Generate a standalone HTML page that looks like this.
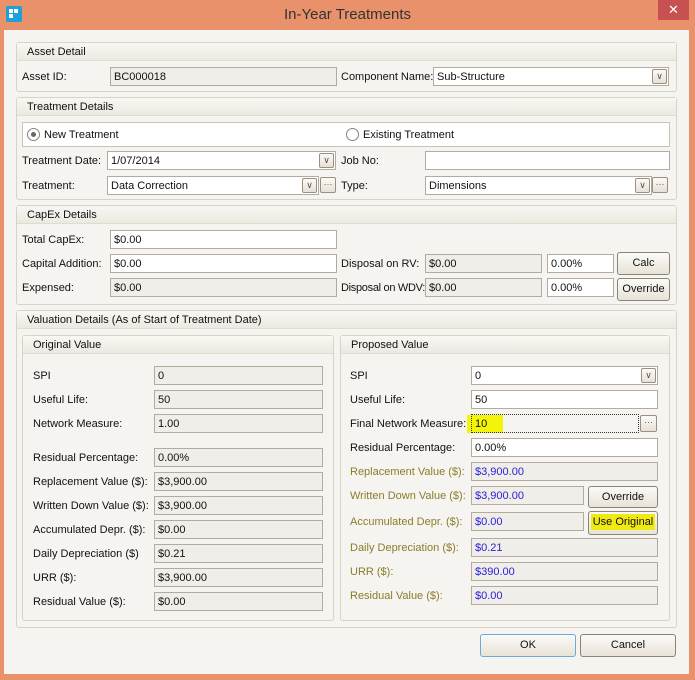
<!DOCTYPE html>
<html><head><meta charset="utf-8"><style>
*{box-sizing:border-box;margin:0;padding:0}
body{width:695px;height:680px;background:#E9916A;font-family:"Liberation Sans","DejaVu Sans",sans-serif;font-size:11px;color:#111;position:relative;overflow:hidden}
.a{position:absolute}
.title{left:0;top:0;width:695px;height:30px;text-align:center;line-height:30px;font-size:15px;color:#333}
.close{left:658px;top:0;width:31px;height:20px;background:#C75050;color:#fff;text-align:center;line-height:20px;font-size:13px;font-weight:bold}
.icon{left:6px;top:6px;width:16px;height:16px;background:#1da1d8;border-radius:2px}
.client{left:4px;top:30px;width:685px;height:644px;background:#F5F4F0}
.grp{border:1px solid #d9d3c7;border-radius:3px;background:#F5F4F0}
.hd{position:absolute;left:0;top:0;right:0;height:18px;background:linear-gradient(#f8f7f3,#ece9e1);border-bottom:1px solid #e0dcd2;padding-left:10px;line-height:19px}
.in{border:1px solid #b4aa9e;background:#fff;height:19px;line-height:18px;padding-left:3px;white-space:nowrap}
.g{background:#F0EEE9}
.lb{height:19px;line-height:21px;white-space:nowrap}
.ol{color:#8a7d2a}
.bl{color:#2b20d8}
.dd{border:1px solid #9c8f80;border-radius:2px;background:linear-gradient(#fbfaf7,#e6e1d6);width:15px;height:15px;text-align:center;font-size:9px;line-height:12px;color:#555}
.btn{border:1px solid #8d8274;border-radius:3px;background:linear-gradient(#fbfaf7,#e8e3d8);text-align:center;line-height:21px}
</style></head><body>
<div class="a icon"><div class="a" style="left:3px;top:3px;width:4px;height:4px;background:#fff"></div><div class="a" style="left:8px;top:3px;width:4px;height:4px;background:#fff"></div><div class="a" style="left:3px;top:8px;width:4px;height:4px;background:#fff"></div></div>
<div class="a title">In-Year Treatments</div>
<div class="a close">✕</div>
<div class="a client"></div>

<div class="a grp" style="left:16px;top:42px;width:661px;height:50px"><div class="hd">Asset Detail</div></div>
<div class="a lb" style="left:22px;top:67px">Asset ID:</div>
<div class="a in g" style="left:110px;top:67px;width:227px">BC000018</div>
<div class="a lb" style="left:341px;top:67px">Component Name:</div>
<div class="a in" style="left:433px;top:67px;width:236px">Sub-Structure</div>
<div class="a dd" style="left:652px;top:69px">∨</div>

<div class="a grp" style="left:16px;top:97px;width:661px;height:103px"><div class="hd">Treatment Details</div></div>
<div class="a" style="left:22px;top:122px;width:648px;height:25px;border:1px solid #c9c2b6;background:#fff"></div>
<div class="a" style="left:27px;top:128px;width:13px;height:13px;border:1px solid #8d8274;border-radius:50%;background:#fff"><div class="a" style="left:3px;top:3px;width:5px;height:5px;border-radius:50%;background:#666"></div></div>
<div class="a lb" style="left:44px;top:125px">New Treatment</div>
<div class="a" style="left:346px;top:128px;width:13px;height:13px;border:1px solid #8d8274;border-radius:50%;background:#fff"></div>
<div class="a lb" style="left:363px;top:125px">Existing Treatment</div>
<div class="a lb" style="left:22px;top:151px">Treatment Date:</div>
<div class="a in" style="left:107px;top:151px;width:229px">1/07/2014</div>
<div class="a dd" style="left:319px;top:153px">∨</div>
<div class="a lb" style="left:341px;top:151px">Job No:</div>
<div class="a in" style="left:425px;top:151px;width:245px"></div>
<div class="a lb" style="left:22px;top:176px">Treatment:</div>
<div class="a in" style="left:107px;top:176px;width:212px">Data Correction</div>
<div class="a dd" style="left:302px;top:178px">∨</div>
<div class="a dd" style="left:320px;top:177px;width:16px;height:16px">···</div>
<div class="a lb" style="left:341px;top:176px">Type:</div>
<div class="a in" style="left:425px;top:176px;width:227px">Dimensions</div>
<div class="a dd" style="left:635px;top:178px">∨</div>
<div class="a dd" style="left:652px;top:177px;width:16px;height:16px">···</div>

<div class="a grp" style="left:16px;top:205px;width:661px;height:100px"><div class="hd">CapEx Details</div></div>
<div class="a lb" style="left:22px;top:230px">Total CapEx:</div>
<div class="a in" style="left:110px;top:230px;width:227px">$0.00</div>
<div class="a lb" style="left:22px;top:254px">Capital Addition:</div>
<div class="a in" style="left:110px;top:254px;width:227px">$0.00</div>
<div class="a lb" style="left:22px;top:278px">Expensed:</div>
<div class="a in g" style="left:110px;top:278px;width:227px">$0.00</div>
<div class="a lb" style="left:341px;top:254px">Disposal on RV:</div>
<div class="a in g" style="left:425px;top:254px;width:117px">$0.00</div>
<div class="a in" style="left:547px;top:254px;width:67px">0.00%</div>
<div class="a btn" style="left:617px;top:252px;width:53px;height:23px">Calc</div>
<div class="a lb" style="left:341px;top:278px;letter-spacing:-0.3px">Disposal on WDV:</div>
<div class="a in g" style="left:425px;top:278px;width:117px">$0.00</div>
<div class="a in" style="left:547px;top:278px;width:67px">0.00%</div>
<div class="a btn" style="left:617px;top:278px;width:53px;height:23px">Override</div>

<div class="a grp" style="left:16px;top:310px;width:661px;height:318px"><div class="hd">Valuation Details (As of Start of Treatment Date)</div></div>
<div class="a grp" style="left:22px;top:335px;width:312px;height:286px"><div class="hd">Original Value</div></div>
<div class="a grp" style="left:340px;top:335px;width:330px;height:286px"><div class="hd">Proposed Value</div></div>

<div class="a lb" style="left:33px;top:366px">SPI</div><div class="a in g" style="left:154px;top:366px;width:169px">0</div>
<div class="a lb" style="left:33px;top:390px">Useful Life:</div><div class="a in g" style="left:154px;top:390px;width:169px">50</div>
<div class="a lb" style="left:33px;top:414px">Network Measure:</div><div class="a in g" style="left:154px;top:414px;width:169px">1.00</div>
<div class="a lb" style="left:33px;top:448px">Residual Percentage:</div><div class="a in g" style="left:154px;top:448px;width:169px">0.00%</div>
<div class="a lb" style="left:33px;top:472px">Replacement Value ($):</div><div class="a in g" style="left:154px;top:472px;width:169px">$3,900.00</div>
<div class="a lb" style="left:33px;top:496px">Written Down Value ($):</div><div class="a in g" style="left:154px;top:496px;width:169px">$3,900.00</div>
<div class="a lb" style="left:33px;top:520px">Accumulated Depr. ($):</div><div class="a in g" style="left:154px;top:520px;width:169px">$0.00</div>
<div class="a lb" style="left:33px;top:544px">Daily Depreciation ($)</div><div class="a in g" style="left:154px;top:544px;width:169px">$0.21</div>
<div class="a lb" style="left:33px;top:568px">URR ($):</div><div class="a in g" style="left:154px;top:568px;width:169px">$3,900.00</div>
<div class="a lb" style="left:33px;top:592px">Residual Value ($):</div><div class="a in g" style="left:154px;top:592px;width:169px">$0.00</div>

<div class="a lb" style="left:350px;top:366px">SPI</div><div class="a in" style="left:471px;top:366px;width:187px">0</div><div class="a dd" style="left:641px;top:368px">∨</div>
<div class="a lb" style="left:350px;top:390px">Useful Life:</div><div class="a in" style="left:471px;top:390px;width:187px">50</div>
<div class="a lb" style="left:350px;top:414px">Final Network Measure:</div>
<div class="a" style="left:467px;top:415px;width:36px;height:18px;background:#f4f40a"></div>
<div class="a in" style="left:471px;top:414px;width:168px;background:transparent;border-style:dotted;border-color:#333">10</div>
<div class="a dd" style="left:640px;top:415px;width:17px;height:17px">···</div>
<div class="a lb" style="left:350px;top:438px">Residual Percentage:</div><div class="a in" style="left:471px;top:438px;width:187px">0.00%</div>
<div class="a lb ol" style="left:350px;top:462px">Replacement Value ($):</div><div class="a in g bl" style="left:471px;top:462px;width:187px">$3,900.00</div>
<div class="a lb ol" style="left:350px;top:486px">Written Down Value ($):</div><div class="a in g bl" style="left:471px;top:486px;width:113px">$3,900.00</div>
<div class="a btn" style="left:588px;top:486px;width:70px;height:22px">Override</div>
<div class="a lb ol" style="left:350px;top:512px">Accumulated Depr. ($):</div><div class="a in g bl" style="left:471px;top:512px;width:113px">$0.00</div>
<div class="a btn" style="left:588px;top:511px;width:70px;height:24px"><span style="background:#f0ea12;padding:2px 2px">Use Original</span></div>
<div class="a lb ol" style="left:350px;top:538px">Daily Depreciation ($):</div><div class="a in g bl" style="left:471px;top:538px;width:187px">$0.21</div>
<div class="a lb ol" style="left:350px;top:562px">URR ($):</div><div class="a in g bl" style="left:471px;top:562px;width:187px">$390.00</div>
<div class="a lb ol" style="left:350px;top:586px">Residual Value ($):</div><div class="a in g bl" style="left:471px;top:586px;width:187px">$0.00</div>

<div class="a btn" style="left:480px;top:634px;width:96px;height:23px;border-color:#6fa9dc">OK</div>
<div class="a btn" style="left:580px;top:634px;width:96px;height:23px">Cancel</div>
</body></html>
